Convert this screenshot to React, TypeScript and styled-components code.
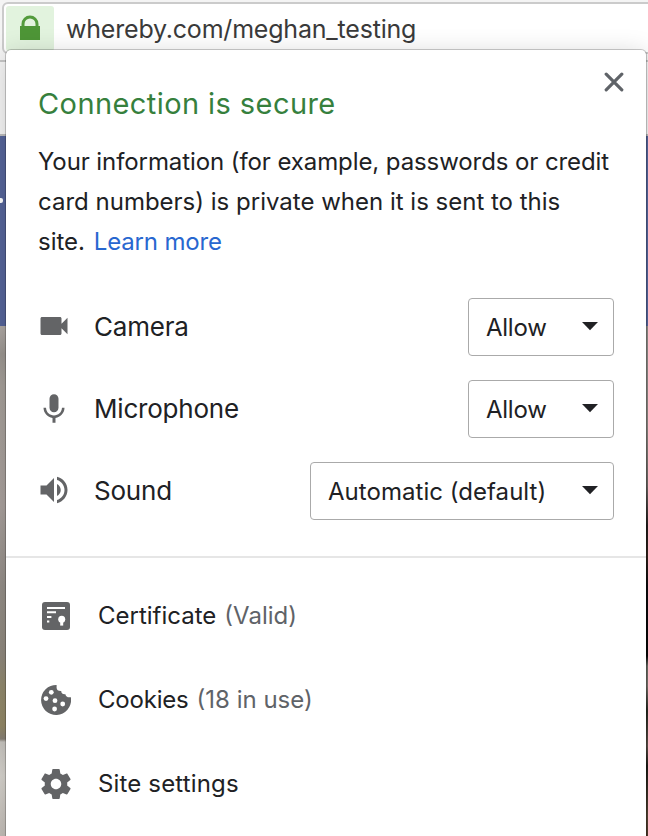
import React from "react";
import styled, { createGlobalStyle } from "styled-components";

const GlobalStyle = createGlobalStyle`
  * { box-sizing: border-box; }
  body { margin: 0; overflow: hidden; background: #fff; }
  svg { display: block; }
`;

const Screen = styled.div`
  position: relative;
  width: 648px;
  height: 836px;
  overflow: hidden;
  display: flex;
  flex-direction: column;
  font-family: Inter, "Liberation Sans", sans-serif;
  color: #202124;
`;

const Toolbar = styled.div`
  height: 62px;
  flex: none;
  padding: 2px 0 0 2px;
  background: #f4f4f4;
  border-bottom: 2px solid #c6c6c6;
`;

const AddressBar = styled.div`
  width: 660px;
  height: 52px;
  display: flex;
  padding: 2px;
  background: #fff;
  border: 2px solid #cbcbcb;
  border-radius: 6px;
`;

const SecureBadge = styled.div`
  width: 48px;
  height: 45px;
  padding: 9px 0 0 13px;
  background: #e2f3de;
  border-radius: 3px;
`;

const Address = styled.div`
  margin-left: 12px;
  font-size: 25px;
  line-height: 46px;
  letter-spacing: -0.2px;
  color: #3a3a3a;
  white-space: nowrap;
`;

const BookmarkBar = styled.div`
  height: 74px;
  flex: none;
  background: #f5f5f5;
  border-bottom: 2px solid #bdbdbd;
`;

const PageHeader = styled.div`
  height: 190px;
  flex: none;
  padding-top: 62px;
  background: #56659a;
`;

const HeaderDot = styled.div`
  width: 3px;
  height: 5px;
  background: #fff;
  border-radius: 0 2px 2px 0;
`;

const Photo = styled.div`
  flex: 1;
  display: flex;
  justify-content: space-between;
`;

const PhotoLeft = styled.div`
  width: 8px;
  background: linear-gradient(#b0aaa6 0, #9c9792 28px, #a6a09a 60px, #a9a19d 180px, #958f89 260px, #90897e 330px, #928a6e 360px, #948967 400px, #888176 413px, #c9c6c1 416px, #d7d4ce 450px, #c4beb8 510px);
`;

const PhotoRight = styled.div`
  width: 8px;
  background: linear-gradient(#8f8c88 0, #8b8580 100px, #6c6663 160px, #221c1b 200px, #30211b 230px, #0c0a0c 260px, #060606 330px, #6a6c64 340px, #77716a 360px, #25281f 385px, #5c5048 420px, #1c1b15 440px, #544333 490px, #4e3829 510px);
`;

const Popover = styled.section`
  position: absolute;
  left: 6px;
  top: 50px;
  width: 640px;
  height: 800px;
  background: #fff;
  border-radius: 5px;
  box-shadow: 0 0 0 1px rgba(0, 0, 0, 0.2), 0 4px 26px rgba(0, 0, 0, 0.18);
`;

const Summary = styled.header`
  position: relative;
  height: 248px;
  padding: 34px 32px 0;
`;

const CloseButton = styled.button`
  position: absolute;
  right: 22px;
  top: 22px;
  width: 20px;
  height: 20px;
  padding: 0;
  border: 0;
  background: none;
`;

const Title = styled.h1`
  margin: 0 0 18px;
  font-size: 29px;
  line-height: 40px;
  font-weight: 400;
  letter-spacing: 0.42px;
  color: #36803d;
`;

const Line = styled.div<{ $tracking?: number }>`
  font-size: 24px;
  line-height: 40px;
  letter-spacing: ${(p) => p.$tracking ?? 0}px;
  white-space: nowrap;
`;

const Link = styled.a`
  margin-left: 2px;
  letter-spacing: -0.15px;
  color: #2867d0;
`;

const Permissions = styled.div`
  height: 260px;
  display: flex;
  flex-direction: column;
  gap: 24px;
  padding: 0 32px;
  border-bottom: 2px solid #e6e6e6;
`;

const PermissionRow = styled.div`
  display: flex;
  align-items: center;
  height: 58px;
`;

const PermissionIcon = styled.div<{ $lift: number }>`
  width: 36px;
  height: 36px;
  margin: 0 22px 0 -2px;
  transform: translateY(${(p) => p.$lift}px);
`;

const PermissionName = styled.span`
  flex: 1;
  font-size: 26px;
  line-height: 40px;
  letter-spacing: -0.2px;
`;

const Select = styled.button<{ $width: number; $tracking: number }>`
  width: ${(p) => p.$width}px;
  height: 58px;
  display: flex;
  align-items: center;
  justify-content: space-between;
  padding: 1px 15px 0 17px;
  font: inherit;
  font-size: 24px;
  letter-spacing: ${(p) => p.$tracking}px;
  color: #202124;
  background: #fff;
  border: 1px solid #aaa;
  border-radius: 4px;
  white-space: nowrap;

  svg { margin-bottom: 2px; }
`;

const Details = styled.div`
  display: flex;
  flex-direction: column;
  padding: 16px 32px 0;
`;

const DetailRow = styled.div`
  height: 84px;
  display: flex;
  align-items: center;
`;

const DetailIcon = styled.div`
  width: 36px;
  height: 36px;
  margin-right: 24px;
`;

const DetailText = styled.div<{ $tracking?: number }>`
  padding-bottom: 2px;
  font-size: 24px;
  letter-spacing: ${(p) => p.$tracking ?? 0}px;
`;

const Muted = styled.span`
  margin-left: 8px;
  letter-spacing: 0;
  color: #5f6368;
`;

const GREY = "#636466";

const Lock = () => (
  <svg width="22" height="26" viewBox="0 0 22 26">
    <path d="M4 12V8.9a7 7 0 0 1 14 0V12" fill="none" stroke="#539b3c" strokeWidth="3" />
    <rect x="1" y="11" width="20" height="14" fill="#4e9637" />
  </svg>
);

const Close = () => (
  <svg width="20" height="20" viewBox="0 0 20 20">
    <path d="M2.2 2.2l15.6 15.6M17.8 2.2L2.2 17.8" stroke="#5f6368" strokeWidth="3.2" strokeLinecap="round" />
  </svg>
);

const Glyph = ({ d }: { d: string }) => (
  <svg width="36" height="36" viewBox="0 0 24 24">
    <path d={d} fill={GREY} />
  </svg>
);

const Arrow = () => (
  <svg width="16" height="9" viewBox="0 0 16 9">
    <path d="M0 0h16L8 8.2z" fill="#202124" />
  </svg>
);

const CAMERA =
  "M17 10.5V7c0-.55-.45-1-1-1H4c-.55 0-1 .45-1 1v10c0 .55.45 1 1 1h12c.55 0 1-.45 1-1v-3.5l4 4v-11l-4 4z";
const MIC =
  "M12 14c1.66 0 2.99-1.34 2.99-3L15 5c0-1.66-1.34-3-3-3S9 3.34 9 5v6c0 1.66 1.34 3 3 3zm5.3-3c0 3-2.54 5.1-5.3 5.1S6.7 14 6.7 11H5c0 3.41 2.72 6.23 6 6.72V21h2v-3.28c3.28-.48 6-3.3 6-6.72h-1.7z";
const SOUND =
  "M3 9v6h4l5 5V4L7 9H3zm13.5 3c0-1.77-1.02-3.29-2.5-4.03v8.05c1.48-.73 2.5-2.25 2.5-4.02zM14 3.23v2.06c2.89.86 5 3.54 5 6.71s-2.11 5.85-5 6.71v2.06c4.01-.91 7-4.49 7-8.77s-2.99-7.86-7-8.77z";
const GEAR =
  "M19.43 12.98c.04-.32.07-.64.07-.98s-.03-.66-.07-.98l2.11-1.65c.19-.15.24-.42.12-.64l-2-3.46c-.12-.22-.39-.3-.61-.22l-2.49 1c-.52-.4-1.08-.73-1.69-.98l-.38-2.65C14.46 2.18 14.25 2 14 2h-4c-.25 0-.46.18-.49.42l-.38 2.65c-.61.25-1.17.59-1.69.98l-2.49-1c-.23-.09-.49 0-.61.22l-2 3.46c-.13.22-.07.49.12.64l2.11 1.65c-.04.32-.07.65-.07.98s.03.66.07.98l-2.11 1.65c-.19.15-.24.42-.12.64l2 3.46c.12.22.39.3.61.22l2.49-1c.52.4 1.08.73 1.69.98l.38 2.65c.03.24.24.42.49.42h4c.25 0 .46-.18.49-.42l.38-2.65c.61-.25 1.17-.59 1.69-.98l2.49 1c.23.09.49 0 .61-.22l2-3.46c.12-.22.07-.49-.12-.64l-2.11-1.65zM12 15.5c-1.93 0-3.5-1.57-3.5-3.5s1.57-3.5 3.5-3.5 3.5 1.57 3.5 3.5-1.57 3.5-3.5 3.5z";

const Certificate = () => (
  <svg width="36" height="36" viewBox="0 0 36 36">
    <rect x="4" y="4" width="28" height="28" rx="3" fill={GREY} />
    <path d="M9 9h18v2H9zM9 13.2h9v2H9zM9 18h4.4v2H9zM9 22.4h2.3v2.2H9z" fill="#fff" />
    <circle cx="23.7" cy="21.3" r="3.5" fill="#fff" />
    <path d="M22.2 23h3v4.6h-3z" fill="#fff" />
  </svg>
);

const Cookie = () => (
  <svg width="36" height="36" viewBox="0 0 36 36">
    <path
      d="M18.6 3A15 15 0 1 0 33 16.5l-.1-1.3q-5 .6-5.5-3-4 .3-4.2-3.2-4.4.2-4.6-3.2z"
      fill={GREY}
    />
    <g fill="#fff">
      <circle cx="13.3" cy="10.3" r="2.4" />
      <circle cx="8" cy="16.6" r="2.4" />
      <circle cx="17" cy="18.7" r="2.4" />
      <circle cx="24.7" cy="22" r="2.4" />
      <circle cx="16.6" cy="27" r="2.4" />
    </g>
  </svg>
);

const permissions = [
  { name: "Camera", icon: CAMERA, value: "Allow", width: 146, lift: -1, tracking: -0.25 },
  { name: "Microphone", icon: MIC, value: "Allow", width: 146, lift: 0.3, tracking: -0.25 },
  { name: "Sound", icon: SOUND, value: "Automatic (default)", width: 304, lift: -1, tracking: 0.04 },
];

export default function App() {
  return (
    <>
      <GlobalStyle />
      <Screen>
        <Toolbar>
          <AddressBar>
            <SecureBadge><Lock /></SecureBadge>
            <Address>whereby.com/meghan_testing</Address>
          </AddressBar>
        </Toolbar>
        <BookmarkBar />
        <PageHeader><HeaderDot /></PageHeader>
        <Photo><PhotoLeft /><PhotoRight /></Photo>
        <Popover>
          <Summary>
            <Title>Connection is secure</Title>
            <Line $tracking={-0.09}>Your information (for example, passwords or credit</Line>
            <Line>card numbers) is private when it is sent to this</Line>
            <Line>site. <Link>Learn more</Link></Line>
            <CloseButton aria-label="Close"><Close /></CloseButton>
          </Summary>
          <Permissions>
            {permissions.map((p) => (
              <PermissionRow key={p.name}>
                <PermissionIcon $lift={p.lift}><Glyph d={p.icon} /></PermissionIcon>
                <PermissionName>{p.name}</PermissionName>
                <Select $width={p.width} $tracking={p.tracking}>{p.value}<Arrow /></Select>
              </PermissionRow>
            ))}
          </Permissions>
          <Details>
            <DetailRow>
              <DetailIcon><Certificate /></DetailIcon>
              <DetailText>Certificate<Muted>(Valid)</Muted></DetailText>
            </DetailRow>
            <DetailRow>
              <DetailIcon><Cookie /></DetailIcon>
              <DetailText $tracking={-0.2}>Cookies<Muted>(18 in use)</Muted></DetailText>
            </DetailRow>
            <DetailRow>
              <DetailIcon><Glyph d={GEAR} /></DetailIcon>
              <DetailText $tracking={0.16}>Site settings</DetailText>
            </DetailRow>
          </Details>
        </Popover>
      </Screen>
    </>
  );
}
